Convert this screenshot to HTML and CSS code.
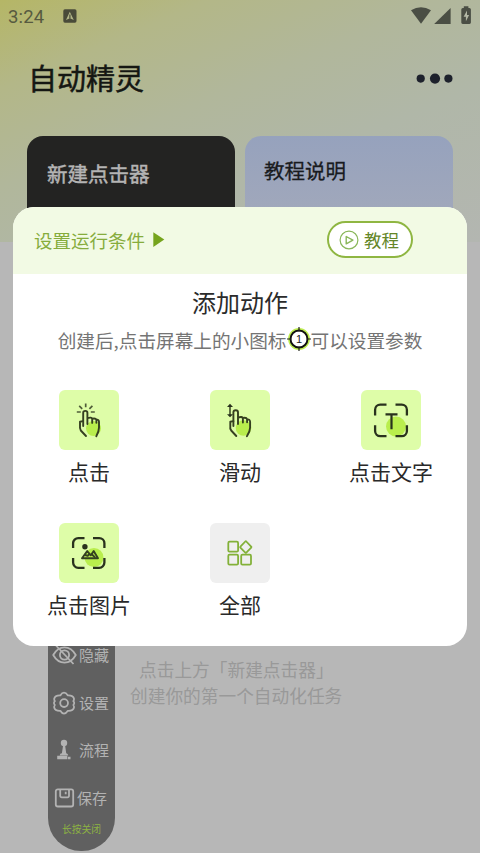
FILE: index.html
```html
<!DOCTYPE html>
<html lang="zh-CN">
<head>
<meta charset="utf-8">
<title>自动精灵</title>
<link rel="stylesheet" href="styles.css">
</head>
<body>
<div class="screen">
  <div class="hero">
    <header class="status">
      <span class="clock">3:24</span>
      <svg class="status-app" width="14" height="14" viewBox="0 0 14 14"><rect x="0.3" y="0.3" width="13.2" height="13.4" rx="1.6" fill="#494b39"/><path d="M3 11 6.8 2.8 10.8 11 6.9 9.2Z" fill="#b2b688"/><path d="M6.9 5.5v4" stroke="#494b39" stroke-width="1.2"/></svg>
      <svg class="status-icons" width="62" height="20" viewBox="0 0 62 20"><path d="M0 4.2Q10 -1.8 20 4.2L10 17.7Z" fill="#4a4e44"/><path d="M23.2 18 39.6 2V18Z" fill="#4a4e44"/><path d="M50.3 3.6a1.5 1.5 0 0 1 1.5-1.5h1V.3h4.6v1.8h1a1.5 1.5 0 0 1 1.5 1.5v13a1.4 1.4 0 0 1-1.4 1.4h-6.8a1.4 1.4 0 0 1-1.4-1.4Z" fill="#4a4e44"/><path d="M56 4.5 52.6 10.8h2.3v4.5l3.2-6.3h-2.1Z" fill="#b3b8a5"/></svg>
    </header>
    <div class="title-row">
      <h1>自动精灵</h1>
      <svg width="37" height="12" viewBox="0 0 37 12" fill="#1d212c"><circle cx="4.7" cy="6.6" r="4.1"/><circle cx="19" cy="6.6" r="5.1"/><circle cx="32.4" cy="6.6" r="4.1"/></svg>
    </div>
    <div class="cards">
      <div class="card dark">新建点击器</div>
      <div class="card blue">教程说明</div>
    </div>
  </div>
  <div class="empty">
    <p class="empty-lead">点击上方「新建点击器」</p>
    <p>创建你的第一个自动化任务</p>
  </div>

  <aside class="toolbar">
    <div class="tool"><svg width="25" height="24" viewBox="0 0 25 24"><path d="M1.2 12C7 1.8 18 1.8 23.8 12 18 22.2 7 22.2 1.2 12Z"/><circle cx="12.5" cy="12" r="4.6"/><path d="m3.5 2 18 19"/></svg><span>隐藏</span></div>
    <div class="tool"><svg width="25" height="24" viewBox="0 0 25 24"><path d="M8.3 4.4Q10 1.7 12 1.7T15.9 4.4Q21.2 4.2 22 7.7 22.2 9.2 21.3 10.2 23.2 12 21.3 14Q22.2 15 22 16.5 21.2 20 15.9 19.8 14 22.6 12 22.6T8.3 19.8Q3 20 2.2 16.5 2 15 2.9 14 1 12 2.9 10.2 2 9.2 2.2 7.7 3 4.2 8.3 4.4Z"/><circle cx="12.1" cy="12.1" r="3.9"/></svg><span>设置</span></div>
    <div class="tool"><svg class="solid" width="25" height="24" viewBox="0 0 25 24"><circle cx="12" cy="5" r="3.2"/><path d="M11 8h2.2l1 7.3a2.3 2.3 0 0 1 2 2.1H7.7a2.3 2.3 0 0 1 2.2-2.1Z"/><path d="M5.2 17.8h10.1v3.4H5.2zM15.9 18.7h2.6v2.5h-2.6z"/></svg><span>流程</span></div>
    <div class="tool"><svg width="25" height="24" viewBox="0 0 25 24"><rect x="3.8" y="3.3" width="17.4" height="17.2" rx="2"/><path d="M8.2 3.5v6.3a1.5 1.5 0 0 0 1.5 1.5h5.8a1.5 1.5 0 0 0 1.5-1.5V3.5M13.7 5.7v2.6"/></svg><span class="save">保存</span></div>
    <div class="hold">长按关闭</div>
  </aside>

  <section class="dialog">
    <div class="dialog-head">
      <div class="condition"><span>设置运行条件</span><svg width="12" height="16" viewBox="0 0 12 16"><path d="M.3.3 11.3 7.6 .3 15Z" fill="#76a41d"/></svg></div>
      <div class="tutorial"><svg width="20" height="20" viewBox="0 0 20 20" fill="none" stroke="#8ab75b"><circle cx="10" cy="10" r="8.9" stroke-width="1.2"/><path d="M7.2 6.5v7.4l6.7-3.7Z" stroke-width="1.4" stroke-linejoin="round"/></svg><span>教程</span></div>
    </div>
    <h2>添加动作</h2>
    <p class="hint"><span>创建后,点击屏幕上的小图标</span><svg width="24" height="24" viewBox="0 0 24 24"><circle cx="12" cy="12" r="9.4" fill="none" stroke="#bdec50" stroke-width="3"/><circle cx="12" cy="12" r="8.5" fill="#fff" stroke="#111" stroke-width="1.9"/><path d="M12 0v4.5M12 19.5v4.5M0 12h4.5M19.5 12h4.5" stroke="#22251d" stroke-width="1.2"/><text x="12" y="16">1</text></svg><span>可以设置参数</span></p>
    <div class="actions">
      <div class="action"><div class="tile"><svg width="60" height="60" viewBox="0 0 60 60"><circle cx="34.5" cy="38.5" r="7.5" fill="#b9ee4d"/><g class="ink"><path d="M27 46 21.8 40.5Q20.6 38.5 21 36v-4.3l3-.6"/><path d="M24.2 36V22.7q0-1.8 2.1-1.8t2.1 1.8V34M28.5 28.2q4-1.4 4.7.7v4M33.2 28.7q3.5-.8 4.2.9v3.2M37.4 29.8q2.6-.5 2.6 2.3v5.5q0 4-2.7 8.6"/></g><path class="ray" d="M26.7 13.5v3.7M20.2 15.8l3 3M33.4 15.8l-3 3M17.8 22h4M31.8 22h4"/></svg></div><span>点击</span></div>
      <div class="action"><div class="tile"><svg width="60" height="60" viewBox="0 0 60 60"><circle cx="33.5" cy="38" r="7.8" fill="#b9ee4d"/><g class="ink"><path d="M26.3 46 21.2 40.5Q19.8 38.5 20.3 36v-4.3l3.1-.6"/><path d="M23.4 36V22.2q0-2 2.3-2t2.3 2V34M28 27.5q4.2-1.4 4.9.7v4.3M32.9 28q3.6-.8 4.2 1.2v3M37.1 29.5q3-.5 3 2.6v5.5q0 4-3.2 8.6"/></g><path d="M20 15.5v9.5" stroke="#354020" stroke-width="1.5"/><path d="m17 16.9 3-3.1 3 3.1ZM17 24.2l3 3.1 3-3.1Z" fill="#29321d"/></svg></div><span>滑动</span></div>
      <div class="action"><div class="tile"><svg width="60" height="60" viewBox="0 0 60 60"><circle cx="35" cy="36.5" r="10" fill="#b9ee4d"/><path class="frame" d="M25.5 14.6h-6.2a5.2 5.2 0 0 0-5.2 5.2v5.6M34.5 14.6h6.2a5.2 5.2 0 0 1 5.2 5.2v5.6M25.5 46.1h-6.2a5.2 5.2 0 0 1-5.2-5.2v-5.6M34.5 46.1h6.2a5.2 5.2 0 0 0 5.2-5.2v-5.6"/><path d="M24.5 24.3h12M30.5 24.3v15" fill="none" stroke="#29321d" stroke-width="2.2"/></svg></div><span>点击文字</span></div>
      <div class="action"><div class="tile"><svg width="60" height="60" viewBox="0 0 60 60"><circle cx="35" cy="34.5" r="9.5" fill="#b9ee4d"/><path class="frame" d="M25.5 15.1h-6.2a5.2 5.2 0 0 0-5.2 5.2v4.6M34 15.1h6.2a5.2 5.2 0 0 1 5.2 5.2v4.6M25.5 44.8h-6.2a5.2 5.2 0 0 1-5.2-5.2V35M34 44.8h6.2a5.2 5.2 0 0 0 5.2-5.2V35"/><path d="m23 35.3 5.2-7.2 3.6 4.2 2.9-4.2 4.3 7.2Z" class="ink"/><path d="m26.4 32 2.3.8 1.3-1.3M33 31.5l2.8 2.6" class="ink"/><circle cx="25.9" cy="23.8" r="2.7" fill="#29321d"/></svg></div><span>点击图片</span></div>
      <div class="action"><div class="tile grey"><svg width="60" height="60" viewBox="0 0 60 60" fill="none" stroke="#83b139" stroke-width="1.8"><rect x="18.3" y="18.7" width="9.8" height="10" rx="1.2"/><rect x="18.3" y="31.7" width="9.8" height="10" rx="1.2"/><rect x="31.2" y="31.7" width="9.8" height="10" rx="1.2"/><path d="m36.3 18.5 4.9 5.1q.5.5 0 1L36.3 29.6q-.5.5-1 0L30.4 24.6q-.5-.5 0-1L35.3 18.5q.5-.5 1 0Z"/></svg></div><span>全部</span></div>
    </div>
  </section>
</div>
</body>
</html>
```

FILE: styles.css
```css
* { box-sizing: border-box; }
body, h1, h2, p { margin: 0; font-weight: 400; }
body { font-family: "Noto Sans CJK SC", sans-serif; }
svg { display: block; flex: none; }
span { white-space: nowrap; }

.screen { position: relative; width: 480px; height: 853px; overflow: hidden; background: #b7b7b7; }
.hero {
  height: 242px;
  background: linear-gradient(157deg, #b5b666 0%, #b3b788 20%, #b1b79b 42%, #b0b7a8 65%, #b3b6b1 100%);
}

.status { display: flex; height: 36px; padding: 6px 7px 0 8px; }
.clock { width: 55px; font: 18.5px/22px Roboto, sans-serif; color: #575a40; letter-spacing: .2px; }
.status-app { margin-top: 3px; }
.status-icons { margin-left: auto; }

.title-row { display: flex; align-items: center; justify-content: space-between; height: 84px; padding: 0 27px 0 28px; }
h1 { margin-top: -2px; font-size: 29px; line-height: 40px; color: #151713; -webkit-text-stroke: .5px #151713; }

.cards { display: flex; gap: 10px; margin-top: 16px; padding: 0 27px; }
.card { width: 208px; height: 106px; border-radius: 16px 16px 0 0; font-size: 20.5px; line-height: 30px; }
.dark { padding: 22px 20px; background: #232322; color: #b4b4b4; -webkit-text-stroke: .5px #b4b4b4; }
.blue { padding: 19px 19px; background: linear-gradient(#96a2bd, #a1a8bb 75%); color: #191b20; -webkit-text-stroke: .3px #191b20; }

.empty { width: 213px; margin: 414px 0 0 130px; font-size: 17.7px; line-height: 26px; color: #999; }
.empty-lead { padding-left: 9px; }
.empty p { white-space: nowrap; }

.toolbar {
  position: absolute; left: 48px; top: 560px; width: 67px; height: 291px;
  padding-top: 71px; border-radius: 33px; background: #606060; color: #b3b3b3;
}
.tool { display: flex; align-items: center; height: 47.7px; padding-left: 4px; gap: 2px; font-size: 15px; }
.tool > span { margin-top: -1px; }
.tool > .save { margin-left: -2px; }
.tool svg { fill: none; stroke: #b3b3b3; stroke-width: 1.8; stroke-linejoin: round; }
.tool .solid { fill: #b3b3b3; stroke: none; }
.hold { margin-top: -1px; text-align: center; font-size: 9.8px; line-height: 16px; color: #8db243; }

.dialog { position: absolute; left: 13px; top: 207px; width: 454px; height: 439px; overflow: hidden; border-radius: 21px; background: #fff; }
.dialog-head { display: flex; align-items: center; justify-content: space-between; height: 67px; padding: 0 54px 2px 21px; background: #f2fae4; }
.condition { display: flex; align-items: center; gap: 8px; font-size: 18.5px; color: #86ac3c; }
.tutorial { display: flex; align-items: center; gap: 5px; width: 86px; height: 37px; padding-left: 10px; border: 2px solid #8fb642; border-radius: 19px; background: #fff; color: #648628; font-size: 17.5px; }
.tutorial > span { margin-top: -1px; }
h2 { margin-top: 10px; text-align: center; font-size: 24px; line-height: 36px; color: #2b2b2b; }
.hint { display: flex; align-items: center; justify-content: center; height: 24px; margin-top: 7px; font-size: 18.65px; color: #747474; }
.hint text { font: 11px "Liberation Sans", sans-serif; fill: #222; text-anchor: middle; }

.actions { display: grid; grid-template-columns: repeat(3, 151px); grid-auto-rows: 133px; justify-content: center; margin-top: 38.5px; }
.action { display: flex; flex-direction: column; align-items: center; font-size: 21px; line-height: 32px; color: #292929; }
.action > span { margin-top: 5.5px; }
.tile { width: 60px; height: 60px; border-radius: 6px; background: #defda8; }
.grey { background: #efefef; }
.ink { fill: none; stroke: #354020; stroke-width: 1.9; stroke-linejoin: round; stroke-linecap: round; }
.ray { fill: none; stroke: #4f5c38; stroke-width: 1.7; }
.frame { fill: none; stroke: #29321d; stroke-width: 2.3; }
```
